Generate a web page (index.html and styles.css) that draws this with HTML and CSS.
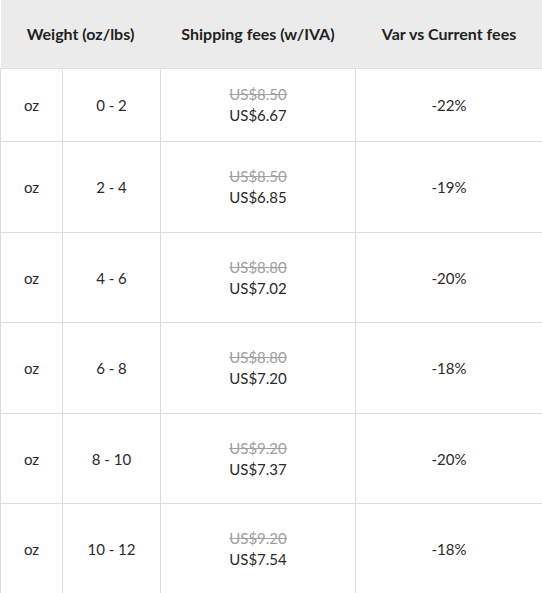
FILE: index.html
```html
<!DOCTYPE html>
<html>
<head>
<meta charset="utf-8">
<link rel="stylesheet" href="styles.css">
</head>
<body>
<table class="fees">
  <colgroup>
    <col class="c1"><col class="c2"><col class="c3"><col class="c4">
  </colgroup>
  <thead>
    <tr class="head">
      <th colspan="2">Weight (oz/lbs)</th>
      <th>Shipping fees (w/IVA)</th>
      <th>Var vs Current fees</th>
    </tr>
  </thead>
  <tbody>
    <tr class="first">
      <td>oz</td><td>0 - 2</td>
      <td><span class="old">US$8.50</span><span class="new">US$6.67</span></td>
      <td>-22%</td>
    </tr>
    <tr>
      <td>oz</td><td>2 - 4</td>
      <td><span class="old">US$8.50</span><span class="new">US$6.85</span></td>
      <td>-19%</td>
    </tr>
    <tr class="short">
      <td>oz</td><td>4 - 6</td>
      <td><span class="old">US$8.80</span><span class="new">US$7.02</span></td>
      <td>-20%</td>
    </tr>
    <tr>
      <td>oz</td><td>6 - 8</td>
      <td><span class="old">US$8.80</span><span class="new">US$7.20</span></td>
      <td>-18%</td>
    </tr>
    <tr class="short">
      <td>oz</td><td>8 - 10</td>
      <td><span class="old">US$9.20</span><span class="new">US$7.37</span></td>
      <td>-20%</td>
    </tr>
    <tr>
      <td>oz</td><td>10 - 12</td>
      <td><span class="old">US$9.20</span><span class="new">US$7.54</span></td>
      <td>-18%</td>
    </tr>
  </tbody>
</table>
</body>
</html>
```
FILE: styles.css
```css
html, body {
  margin: 0;
  padding: 0;
  background: #fff;
}
body {
  font-family: Lato, "Open Sans", sans-serif;
  color: #222;
  font-size: 15px;
}
.fees {
  width: 542px;
  border-collapse: collapse;
  table-layout: fixed;
}
.c1 { width: 62px; }
.c2 { width: 98px; }
.c3 { width: 195px; }
.c4 { width: 187px; }
.head th {
  background: #ebebeb;
  height: 66px;
  padding: 0 0 2px;
  font-size: 16px;
  font-weight: 700;
  color: #222;
  text-align: center;
  border-bottom: 1px solid #ddd;
}
td {
  border: 1px solid #ddd;
  text-align: center;
  padding: 0;
  height: 90px;
  line-height: 20px;
  font-weight: 400;
  color: #2a2a2a;
}
tr.first td {
  height: 72px;
}
tr.short td {
  height: 89px;
}
.old {
  display: block;
  color: #a0a0a0;
  text-decoration: line-through;
  margin-top: -1px;
  margin-bottom: 1px;
}
.new {
  display: block;
}
```
